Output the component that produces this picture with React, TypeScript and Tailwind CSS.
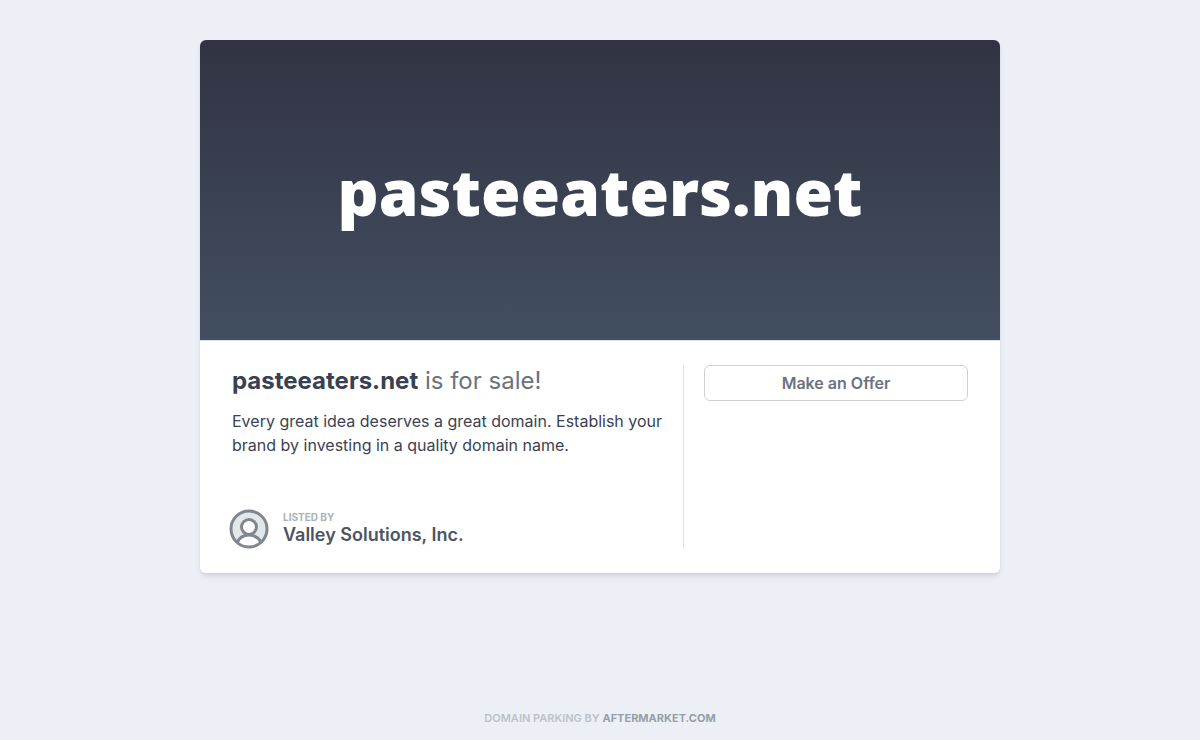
import React from 'react';

const listing = {
  domain: 'pasteeaters.net',
  description: 'Every great idea deserves a great domain. Establish your brand by investing in a quality domain name.',
  seller: 'Valley Solutions, Inc.',
};

function SellerIcon() {
  return (
    <svg viewBox="0 0 40 40" className="-ml-[3px] h-10 w-10 shrink-0" fill="none" aria-hidden="true">
      <circle cx="20" cy="20" r="18" fill="#e2e8ea" />
      <path d="M8 33.5C10.5 28.5 15 26 20 26S29.5 28.5 32 33.5C28 36.5 24 38 20 38S12 36.5 8 33.5Z" fill="#fff" />
      <circle cx="20" cy="18" r="7.5" fill="#fff" stroke="#7f868f" strokeWidth="3" />
      <path d="M8 33.5C10.5 28.5 15 26 20 26S29.5 28.5 32 33.5" stroke="#7f868f" strokeWidth="3" />
      <circle cx="20" cy="20" r="18" stroke="#7f868f" strokeWidth="3" />
    </svg>
  );
}

export default function App() {
  return (
    <div className="flex min-h-screen flex-col items-center bg-[#ecf0f6] px-4 pt-10 font-['Inter',sans-serif] text-[#374151]">
      <main className="w-full max-w-[800px] overflow-hidden rounded-md bg-white shadow-md">
        <div className="flex min-h-[301px] items-center justify-center border-b border-[#dce3ec] bg-linear-to-b from-[#313342] to-[#424f61] bg-clip-padding px-6 pt-1">
          <h1 className="font-['Noto_Sans',sans-serif] text-[64px] leading-none font-black text-white">{listing.domain}</h1>
        </div>

        <div className="flex flex-col gap-6 px-8 py-6 sm:flex-row sm:gap-0">
          <section className="flex flex-1 flex-col justify-between gap-13 sm:pr-5">
            <div>
              <h2 className="text-2xl text-[#6b7280]">
                <span className="font-bold text-[#374151]">{listing.domain}</span> is for sale!
              </h2>
              <p className="mt-3 text-base text-[#3b4252]">{listing.description}</p>
            </div>
            <div className="flex items-center gap-3.5">
              <SellerIcon />
              <div>
                <div className="text-[10px] leading-3 font-bold text-[#abb0b9] uppercase">Listed by</div>
                <div className="text-lg leading-6 font-semibold text-[#4b5563]">{listing.seller}</div>
              </div>
            </div>
          </section>

          <aside className="sm:w-[285px] sm:border-l sm:border-[#e0e3e8] sm:pl-5">
            <button
              type="button"
              className="h-9 w-full rounded-md border border-[#cdd0d5] bg-white text-base font-semibold text-[#6b7280] hover:bg-gray-50"
            >
              Make an Offer
            </button>
          </aside>
        </div>
      </main>

      <footer className="mt-auto pt-10 pb-3.5 text-[11px] leading-4 font-semibold text-[#bbc1c8] uppercase">
        Domain parking by <a href="#" className="font-bold text-[#969ea6]">Aftermarket.com</a>
      </footer>
    </div>
  );
}
